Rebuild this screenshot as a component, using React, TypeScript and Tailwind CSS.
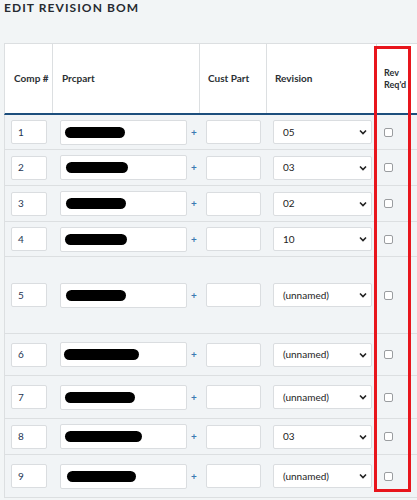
import React from "react";

type Row = { n: string; rev: string; h: string; blot: string };

const rows: Row[] = [
  { n: "1", rev: "05", h: "h-[35px]", blot: "w-[60px] ml-[3px]" },
  { n: "2", rev: "03", h: "h-[36px]", blot: "w-[62px] ml-[4px]" },
  { n: "3", rev: "02", h: "h-[36px]", blot: "w-[60px] ml-[4px]" },
  { n: "4", rev: "10", h: "h-[35px]", blot: "w-[62px] ml-[3px]" },
  { n: "5", rev: "(unnamed)", h: "h-[77px]", blot: "w-[60px] ml-[4px]" },
  { n: "6", rev: "(unnamed)", h: "h-[42px]", blot: "w-[75px] ml-[2px]" },
  { n: "7", rev: "(unnamed)", h: "h-[43px]", blot: "w-[70px] ml-[3px]" },
  { n: "8", rev: "03", h: "h-[36px]", blot: "w-[77px] ml-[3px]" },
  { n: "9", rev: "(unnamed)", h: "h-[43px]", blot: "w-[69px] ml-[5px]" },
];

const cols = "grid grid-cols-[48px_147px_67px_110px_60px]";

function Chevron() {
  return (
    <svg width="8" height="6" viewBox="0 0 8 6" className="shrink-0">
      <path d="M1 1.5 L4 4.5 L7 1.5" fill="none" stroke="#222" strokeWidth="1.6" />
    </svg>
  );
}

export default function App() {
  return (
    <div className="relative w-[417px] h-[500px] overflow-hidden bg-[#f2f5f6] font-['Lato','Open_Sans',sans-serif] text-[#222]">
      <h1 className="pl-[4px] pt-[1px] text-[12px] font-bold tracking-[0.09em] text-[#262b31] leading-[14px]">
        EDIT REVISION BOM
      </h1>

      <div className="ml-[4px] mt-[28px] w-[440px]">
        <div className={`${cols} h-[72px] bg-white border-t border-l border-[#dcdfe1] border-b-2 border-b-[#1d4f7d] text-[10px] font-bold text-[#2b2f33]`}>
          <div className="flex items-center pl-[9px] border-r border-[#dcdfe1]">Comp #</div>
          <div className="flex items-center pl-[9px] border-r border-[#dcdfe1]">Prcpart</div>
          <div className="flex items-center pl-[8px] border-r border-[#dcdfe1]">Cust Part</div>
          <div className="flex items-center pl-[8px] border-r border-[#dcdfe1]">Revision</div>
          <div className="flex items-center pl-[7px] text-[9px] leading-[12px]">
            Rev
            <br />
            Req'd
          </div>
        </div>

        {rows.map((r) => (
          <div key={r.n} className={`${cols} ${r.h} items-center border-l border-b border-[#dcdfe1] bg-[#f1f4f6]`}>
            <div className="pl-[6px]">
              <div className="flex items-center w-[36px] h-[24px] bg-white border border-[#dadde0] rounded-[2px] pl-[6px] text-[10px] text-[#1e3553]">
                {r.n}
              </div>
            </div>
            <div className="pl-[7px] flex items-center">
              <div className="flex items-center w-[127px] h-[25px] bg-white border border-[#dadde0] rounded-[2px] pl-[1px]">
                <div className={`${r.blot} h-[11px] rounded-full bg-black`} />
              </div>
              <span className="ml-[4px] text-[10px] font-bold text-[#3b7ab3]">+</span>
            </div>
            <div className="pl-[6px]">
              <div className="w-[55px] h-[24px] bg-white border border-[#dadde0] rounded-[2px]" />
            </div>
            <div className="pl-[6px]">
              <div className="flex items-center justify-between w-[99px] h-[24px] bg-white border border-[#dadde0] rounded-[2px] pl-[9px] pr-[4px] text-[10px] text-[#222]">
                <span>{r.rev}</span>
                <Chevron />
              </div>
            </div>
            <div className="pl-[7px]">
              <div className="w-[9px] h-[9px] border border-[#9a9da0] rounded-[2px] bg-white" />
            </div>
          </div>
        ))}
      </div>

      <div className="absolute left-[374px] top-[46px] w-[37px] h-[446px] border-[3px] border-[#e8151c]" />
    </div>
  );
}
